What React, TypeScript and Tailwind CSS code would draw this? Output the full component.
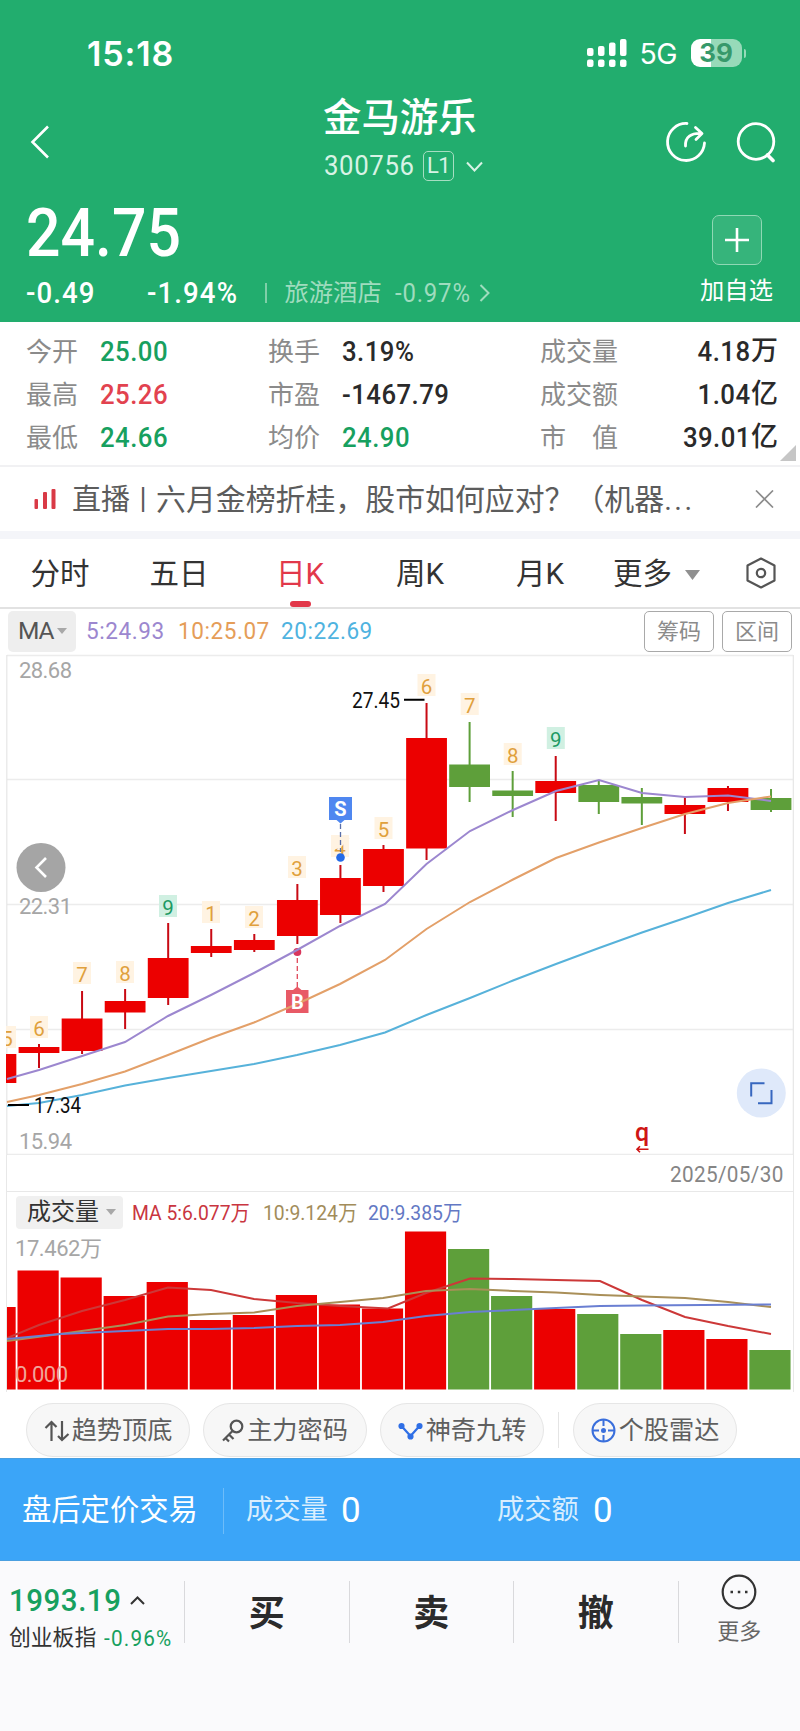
import { useState } from 'react';
import type { ReactNode } from 'react';

interface Candle {
  open: number;
  close: number;
  high: number;
  low: number;
  up: boolean;
  vol: number;
}

interface Count {
  x: number;
  y: number;
  n: string;
  done?: boolean;
}

const RED = '#ec0000';
const GREEN = '#5e9f3a';
const STEP = 43.06;

// values are in chart pixels, top of the page = 0
const candles: Candle[] = [
  { open: 1054, close: 1083, high: 1054, low: 1083, up: true, vol: 1307 },
  { open: 1047, close: 1053, high: 1044, low: 1068, up: true, vol: 1270.5 },
  { open: 1018.5, close: 1051, high: 991, low: 1054, up: true, vol: 1277.5 },
  { open: 1001, close: 1012.5, high: 989, low: 1029, up: true, vol: 1296 },
  { open: 958, close: 998, high: 923, low: 1005, up: true, vol: 1282 },
  { open: 946, close: 953, high: 929, low: 957, up: true, vol: 1320 },
  { open: 940, close: 950, high: 934, low: 952, up: true, vol: 1315 },
  { open: 900, close: 936, high: 884, low: 944, up: true, vol: 1295 },
  { open: 878, close: 915, high: 865, low: 923, up: true, vol: 1304.5 },
  { open: 849, close: 886, high: 845, low: 892, up: true, vol: 1308.5 },
  { open: 738, close: 848.5, high: 703, low: 860, up: true, vol: 1231.5 },
  { open: 764.5, close: 787, high: 722, low: 802, up: false, vol: 1249 },
  { open: 790.5, close: 796, high: 771, low: 817, up: false, vol: 1296 },
  { open: 781, close: 793, high: 756, low: 821, up: true, vol: 1309 },
  { open: 785, close: 802, high: 780, low: 814, up: false, vol: 1314 },
  { open: 797, close: 803.5, high: 788, low: 825, up: false, vol: 1334 },
  { open: 805, close: 814, high: 796, low: 834, up: true, vol: 1330 },
  { open: 788, close: 802, high: 786, low: 811, up: true, vol: 1339 },
  { open: 798, close: 810, high: 789, low: 812, up: false, vol: 1350 },
];

const counts: Count[] = [
  { x: 7, y: 1039, n: '5' },
  { x: 39, y: 1029, n: '6' },
  { x: 82, y: 975, n: '7' },
  { x: 125, y: 974, n: '8' },
  { x: 168, y: 908, n: '9', done: true },
  { x: 211, y: 914, n: '1' },
  { x: 254, y: 919, n: '2' },
  { x: 297, y: 869, n: '3' },
  { x: 340, y: 848, n: '4' },
  { x: 383.5, y: 830, n: '5' },
  { x: 426.5, y: 687, n: '6' },
  { x: 469.7, y: 706, n: '7' },
  { x: 512.7, y: 756, n: '8' },
  { x: 555.8, y: 740, n: '9', done: true },
];

const priceLines = [
  { color: '#9c87cf', points: '7,1079 39,1070 82,1056 125,1042 168,1016 211,995 254,973 297,950 340,926 385,904 426.5,864 470,831 513,810 556,791 599,780 642,793 685,797 728,795.5 771,801' },
  { color: '#e3a069', points: '7,1102 39,1095 82,1084 125,1071.5 168,1055 211,1038 254,1022.5 297,1004 340,984 385,960 426.5,929 470,902 513,879.5 556,858 599,842.5 642,828 685,814 728,803 771,796.5' },
  { color: '#57b2da', points: '7,1106 39,1103 82,1095 125,1085.5 168,1078 211,1071 254,1064 297,1055 340,1045 385,1032.5 426.5,1015 470,998 513,980.5 556,964 599,948 642,932.5 685,918 728,903 771,890' },
];

const volLines = [
  { color: '#cc3838', points: '7,1338 39,1325 82,1311 125,1300 168,1287.5 211,1290 254,1299 297,1303 340,1306 388,1308.5 426,1293 470,1278.5 513,1279 556,1280 600,1281 642,1300 685,1317 728,1326 771,1334' },
  { color: '#a98f58', points: '7,1341 60,1334 125,1325 168,1316.5 211,1314 254,1312.5 297,1306 340,1302 383,1298 426,1291 470,1289 513,1291 556,1292.5 600,1295 642,1296.5 685,1298 728,1302 771,1307' },
  { color: '#6a7fd2', points: '7,1339 60,1334 125,1331 168,1329 211,1329 254,1328 297,1326 340,1325 383,1322 426,1316 470,1312 513,1310 556,1308 600,1306 642,1305.5 771,1304.5' },
];

const quotes = [
  ['今开', '25.00', 'text-[#17a05f]', '换手', '3.19%', 'text-[#2a2a2a]', '成交量', '4.18', '万'],
  ['最高', '25.26', 'text-[#e2424f]', '市盈', '-1467.79', 'text-[#2a2a2a]', '成交额', '1.04', '亿'],
  ['最低', '24.66', 'text-[#17a05f]', '均价', '24.90', 'text-[#17a05f]', '市　值', '39.01', '亿'],
];

const tabs = [
  { name: '分时', width: 'w-[120px]' },
  { name: '五日', width: 'w-[118px]' },
  { name: '日K', width: 'w-[124px]' },
  { name: '周K', width: 'w-[116px]' },
  { name: '月K', width: 'w-[124px]' },
];

// narrow figures
function Num({ className = '', right = false, children }: { className?: string; right?: boolean; children: ReactNode }) {
  return (
    <span className={`inline-block scale-x-92 whitespace-nowrap ${right ? 'origin-right' : 'origin-left'} ${className}`}>{children}</span>
  );
}

function StatusBar() {
  return (
    <div className="flex h-[96px] items-start pl-[87px] pr-[54px] pt-[32px]">
      <span className="font-[Inter] text-[34px] font-semibold leading-[44px] tracking-[0.9px]">15:18</span>
      <div className="ml-auto flex h-[42px] items-center">
        <svg className="h-[28px] w-[40px]" viewBox="0 0 40 28" fill="#fff">
          <rect x="0" y="9" width="6.500" height="8" rx="2" />
          <rect x="11" y="7" width="6.500" height="10" rx="2" />
          <rect x="22" y="3.500" width="6.500" height="13.500" rx="2" />
          <rect x="33" y="0" width="6.500" height="17" rx="2" />
          <rect x="0" y="20.500" width="6.500" height="7.500" rx="2" />
          <rect x="11" y="20.500" width="6.500" height="7.500" rx="2" />
          <rect x="22" y="20.500" width="6.500" height="7.500" rx="2" />
          <rect x="33" y="20.500" width="6.500" height="7.500" rx="2" />
        </svg>
        <span className="ml-[13px] w-[51px] whitespace-nowrap pt-[2px] font-[Inter] text-[28.500px] tracking-[-0.5px]">5G</span>
        <div className="flex h-[28px] w-[51px] items-center justify-center rounded-[9px] bg-linear-to-r from-white from-40% to-[#97dab9] to-40% font-[Inter] text-[26px] font-bold leading-none text-[#37996b]">
          39
        </div>
        <div className="ml-[2px] h-[9px] w-[2.500px] rounded-r bg-[#97dab9]" />
      </div>
    </div>
  );
}

function NavBar() {
  return (
    <div className="flex h-[100px] items-start justify-between pl-[30px] pr-[23px]">
      <svg className="mt-[29px] h-[34px] w-[20px]" viewBox="0 0 20 34" fill="none" stroke="#fff" strokeWidth="2.600">
        <path d="M18 1.500 2.500 17 18 32.500" />
      </svg>
      <div className="ml-[93px] w-[170px]">
        <div className="ml-[4px] whitespace-nowrap text-[38.400px] font-medium leading-[44px]">金马游乐</div>
        <div className="ml-[5px] mt-[8px] flex items-center leading-[36px]">
          <Num className="w-[99px] text-[28px] tracking-[0.7px] text-[#d8f3e5]">300756</Num>
          <span className="flex h-[30px] w-[31px] items-center justify-center rounded-[5px] border-[1.500px] border-[#a6dec2] text-[22px] leading-none tracking-[-0.5px] text-[#d8f3e5]">L1</span>
          <svg className="ml-[12px] h-[11px] w-[17px]" viewBox="0 0 17 11" fill="none" stroke="#d8f3e5" strokeWidth="2">
            <path d="M1 1.500 8.500 9.500 16 1.500" />
          </svg>
        </div>
      </div>
      <div className="mt-[25px] flex gap-[28px]">
        <svg className="h-[42px] w-[42px]" viewBox="0 0 42 42" fill="none" stroke="#fff" strokeWidth="2.800" strokeLinecap="round" strokeLinejoin="round">
          <path d="M22 2.500A18.500 18.500 0 1 0 39.500 22" />
          <path d="M20.500 25C20 16 26 12 36.500 12.500M30.500 6.500 37 12.500 31 18.500" />
        </svg>
        <svg className="h-[42px] w-[42px]" viewBox="0 0 42 42" fill="none" stroke="#fff" strokeWidth="2.800" strokeLinecap="round">
          <circle cx="21" cy="20.500" r="17.800" />
          <path d="M32.500 34 38 39.500" strokeWidth="3.600" />
        </svg>
      </div>
    </div>
  );
}

function Header() {
  return (
    <header className="h-[322px] bg-[#22ad6e] text-white">
      <StatusBar />
      <NavBar />
      <div className="flex justify-between pl-[26px] pr-[27px]">
        <div>
          <Num className="block text-[66px] font-medium leading-[76px]">24.75</Num>
          <div className="mt-[3px] flex h-[36px] items-center text-[30px] tracking-[1.200px]">
            <Num className="w-[121px] font-medium">-0.49</Num>
            <Num className="w-[118px] font-medium">-1.94%</Num>
            <span className="mr-[18px] h-[20px] w-[1.500px] bg-[#7fcfa8]" />
            <span className="w-[110px] text-[24.300px] tracking-normal text-[#9fdcbe]">旅游酒店</span>
            <Num className="w-[84px] text-[26px] tracking-[0.900px] text-[#9fdcbe]">-0.97%</Num>
            <svg className="h-[18px] w-[11px]" viewBox="0 0 11 18" fill="none" stroke="#9fdcbe" strokeWidth="2">
              <path d="M1.500 1 9.500 9 1.500 17" />
            </svg>
          </div>
        </div>
        <div className="flex w-[73px] flex-col items-center">
          <div className="mt-[19px] flex h-[50px] w-[50px] items-center justify-center rounded-[7px] border-[1.500px] border-[#8fd8b4] bg-[#36b47b]">
            <svg className="h-[24px] w-[24px]" viewBox="0 0 24 24" stroke="#fff" strokeWidth="2.600">
              <path d="M12 0V24M0 12H24" />
            </svg>
          </div>
          <span className="mt-[9px] whitespace-nowrap text-[24.300px] leading-[34px]">加自选</span>
        </div>
      </div>
    </header>
  );
}

function Quotes() {
  return (
    <section className="relative h-[145px] border-b-2 border-[#f1f1f3] pl-[26px] pr-[22px] pt-[8px]">
      {quotes.map((q) => (
        <div key={q[0]} className="flex h-[43px] items-center text-[28px] tracking-[0.500px]">
          <span className="w-[74px] text-[26px] tracking-normal text-[#8b8b8b]">{q[0]}</span>
          <Num className={`w-[168px] font-medium ${q[2]}`}>{q[1]}</Num>
          <span className="w-[74px] text-[26px] tracking-normal text-[#8b8b8b]">{q[3]}</span>
          <Num className={`w-[198px] font-medium ${q[5]}`}>{q[4]}</Num>
          <span className="text-[26px] tracking-normal text-[#8b8b8b]">{q[6]}</span>
          <Num right className="ml-auto font-medium text-[#2a2a2a]">{q[7]}</Num>
          <span className="text-[27px] font-medium tracking-normal text-[#2a2a2a]">{q[8]}</span>
        </div>
      ))}
      <svg className="absolute bottom-[4px] right-[4px] h-[16px] w-[16px]" viewBox="0 0 16 16" fill="#c6c6c6">
        <path d="M16 0V16H0Z" />
      </svg>
    </section>
  );
}

function NewsBar() {
  return (
    <section className="flex h-[72px] items-center border-b-8 border-[#f4f5f9] pl-[34px] pr-[26px]">
      <svg className="h-[20px] w-[22px]" viewBox="0 0 22 20" fill="#d93a46">
        <rect x="0.500" y="10" width="3.500" height="10" rx="1" />
        <rect x="9" y="3" width="4" height="17" rx="1" />
        <rect x="17.500" y="0" width="4" height="20" rx="1" />
      </svg>
      <span className="ml-[16px] flex items-center whitespace-nowrap pt-[2px] text-[29px] text-[#5c5c5c]">
        直播
        <span className="w-[26px] pb-[3px] text-center text-[29px]">|</span>
        <span className="text-[29.900px]">六月金榜折桂，股市如何应对？（机器</span>
        <span className="tracking-[2.500px]">...</span>
      </span>
      <svg className="ml-auto h-[18px] w-[19px]" viewBox="0 0 19 18" stroke="#8c8c8c" strokeWidth="1.700">
        <path d="M1 0.500 18 17.500M18 0.500 1 17.500" />
      </svg>
    </section>
  );
}

function Tabs() {
  const [active, setActive] = useState('日K');

  return (
    <nav className="flex h-[70px] items-center border-b-2 border-[#e2e2e2] text-[29.500px] text-[#333]">
      {tabs.map((tab) => (
        <button
          key={tab.name}
          onClick={() => setActive(tab.name)}
          className={`relative flex h-full items-center justify-center pt-[4px] ${tab.width} ${active === tab.name ? 'text-[#e2384a]' : ''}`}
        >
          {tab.name}
          {active === tab.name && <span className="absolute bottom-0 h-[6px] w-[21px] rounded-[3px] bg-[#e2384a]" />}
        </button>
      ))}
      <button className="ml-[11px] flex items-center pt-[4px]">
        更多
        <svg className="ml-[13px] h-[10px] w-[15px]" viewBox="0 0 15 10" fill="#909090">
          <path d="M0 0H15L7.500 10Z" />
        </svg>
      </button>
      <svg className="ml-[46px] h-[32px] w-[30px]" viewBox="0 0 30 32" fill="none" stroke="#555" strokeWidth="2.200" strokeLinejoin="round">
        <path d="M15 1.500 28.500 8.500V23.500L15 30.500 1.500 23.500V8.500Z" />
        <circle cx="15" cy="16" r="4.200" />
      </svg>
    </nav>
  );
}

function MaBar() {
  return (
    <div className="flex h-[44px] items-center pl-[8px] pr-[8px] text-[24.500px] tracking-[0.600px]">
      <div className="flex h-[41px] w-[68px] items-center rounded-[5px] bg-[#eeeeee] pl-[10px] tracking-[-1px] text-[#555]">
        MA
        <svg className="ml-[3px] h-[6px] w-[10px]" viewBox="0 0 10 6" fill="#a8a8a8">
          <path d="M0 0H10L5 6Z" />
        </svg>
      </div>
      <Num className="ml-[10px] w-[92px] text-[#9c87cf]">5:24.93</Num>
      <Num className="w-[103px] text-[#e59d58]">10:25.07</Num>
      <Num className="text-[#4fb3df]">20:22.69</Num>
      <button className="ml-auto h-[41px] w-[70px] rounded-[5px] border-[1.500px] border-[#a9a9a9] pt-[2px] text-[22px] tracking-normal text-[#8b8b8b]">筹码</button>
      <button className="ml-[8px] h-[41px] w-[70px] rounded-[5px] border-[1.500px] border-[#a9a9a9] pt-[2px] text-[22px] tracking-normal text-[#8b8b8b]">区间</button>
    </div>
  );
}

function PriceChart() {
  return (
    <svg className="block h-[502px] w-[800px]" viewBox="0 653 800 502">
      <clipPath id="plot">
        <rect x="6" y="653" width="788" height="502" />
      </clipPath>
      <path d="M7 655.500H793M7 779.500H793M7 904.500H793M7 1029.500H793M7 1154.500H793" stroke="#ececec" strokeWidth="1.300" />
      <path d="M6.800 655V1155M793.300 655V1155" stroke="#e6e6e6" strokeWidth="1.200" />
      <g fill="#a6a6a6" fontSize="22">
        <text x="19" y="678" textLength="53">28.68</text>
        <text x="19" y="914" textLength="53">22.31</text>
        <text x="19" y="1149" textLength="53">15.94</text>
      </g>
      <g clipPath="url(#plot)">
        {counts.map((c) => (
          <g key={c.x}>
            <rect x={c.x - 9} y={c.y - 13} width="18" height="22" fill={c.done ? '#d0f0e2' : '#fff3e2'} />
            <text x={c.x} y={c.y + 7} fontSize="20.500" textAnchor="middle" fill={c.done ? '#1d9a64' : '#e0a03c'}>{c.n}</text>
          </g>
        ))}
        {candles.map((c, i) => {
          const x = 39 + STEP * (i - 1);
          return (
            <g key={i} fill={c.up ? RED : GREEN}>
              <rect x={x - 1} y={c.high} width="2" height={c.low - c.high} fill={c.up ? '#c80a14' : GREEN} />
              <rect x={x - 20.4} y={c.open} width="40.800" height={c.close - c.open} />
            </g>
          );
        })}
      </g>
      <g stroke="#e0485a" fill="#e85a66">
        <path d="M297.300 958V987" strokeWidth="1.300" strokeDasharray="5 3" />
        <path d="M286 990H293L297.300 986.500 301.500 990H308.500V1013H286Z" stroke="none" />
        <circle cx="297.300" cy="952" r="4" fill="#d9365c" stroke="none" />
      </g>
      {priceLines.map((l) => (
        <polyline key={l.color} points={l.points} fill="none" stroke={l.color} strokeWidth="2" />
      ))}
      <text x="297.300" y="1009" fontSize="20" fontWeight="700" fill="#fff" textAnchor="middle">B</text>
      {/* sell marker covers most of the count under it */}
      <path d="M331 838H350L340 848 332 850Z" fill="#fff3e2" />
      <path d="M340.500 824V852" stroke="#5a6fa8" strokeWidth="1.300" strokeDasharray="5 3" />
      <path d="M329 797H352V820H344.500L340.500 823.500 336.500 820H329Z" fill="#4f87f0" />
      <text x="340.500" y="816" fontSize="20" fontWeight="700" fill="#fff" textAnchor="middle">S</text>
      <circle cx="340.500" cy="857.500" r="4.300" fill="#246be8" />
      <g fill="#111" fontSize="21.500">
        <text x="352" y="708" textLength="48" lengthAdjust="spacingAndGlyphs">27.45</text>
        <text x="34" y="1113" textLength="47" lengthAdjust="spacingAndGlyphs">17.34</text>
      </g>
      <path d="M404 699.800H424.500M8 1105H29" stroke="#000" strokeWidth="2" />
      <text x="642" y="1141" fontSize="25" fontWeight="500" fill="#cf1515" textAnchor="middle">q</text>
      <path d="M648.500 1149.300H637M640 1146.300 637 1149.300 640 1152.300" fill="none" stroke="#cf1515" strokeWidth="1.600" />
      <circle cx="41" cy="867.500" r="24.500" fill="#a5a5a5" />
      <path d="M46 858 36.500 867.500 46 877" fill="none" stroke="#fff" strokeWidth="2.600" />
      <circle cx="761.300" cy="1093" r="24.500" fill="#dfe9fa" />
      <path d="M751.200 1096.500V1083.200H764.500M771.500 1090V1103.200H758" fill="none" stroke="#3767bf" strokeWidth="2" />
    </svg>
  );
}

function VolumeChart() {
  return (
    <svg className="block h-[163px] w-[786px]" viewBox="7 1229 786 163">
      <text x="15" y="1256" fontSize="22" fill="#a6a6a6" textLength="87">17.462万</text>
      {candles.map((c, i) => (
        <rect key={i} x={17.5 + (i - 1) * 43.05} y={c.vol} width="41.200" height={1389.5 - c.vol} fill={c.up ? RED : GREEN} />
      ))}
      {volLines.map((l) => (
        <polyline key={l.color} points={l.points} fill="none" stroke={l.color} strokeWidth="2" />
      ))}
      <text x="15" y="1382" fontSize="22" fill="#f0a49a" textLength="53">0.000</text>
    </svg>
  );
}

function VolumePanel() {
  return (
    <section className="ml-[6px] mr-[6px] border-x border-[#e8e8e8]">
      <div className="flex h-[37px] items-center justify-end border-b border-[#e8e8e8] pr-[9px] pt-[2px] text-[22.500px] tracking-[0.400px] text-[#858585]">
        <Num right>2025/05/30</Num>
      </div>
      <div className="flex h-[37px] items-center whitespace-nowrap pl-[9px] pt-[3px] text-[21px]">
        <div className="flex h-[33px] w-[107px] items-center rounded-[4px] bg-[#f0f0f0] pl-[11px] text-[24px] text-[#333]">
          成交量
          <svg className="ml-[7px] h-[6px] w-[10px]" viewBox="0 0 10 6" fill="#a8a8a8">
            <path d="M0 0H10L5 6Z" />
          </svg>
        </div>
        <Num className="ml-[9px] w-[131px] pt-[2px] text-[#c93540]">MA 5:6.077万</Num>
        <Num className="w-[105px] pt-[2px] text-[#a28c5a]">10:9.124万</Num>
        <Num className="pt-[2px] text-[#6378c4]">20:9.385万</Num>
      </div>
      <VolumeChart />
    </section>
  );
}

function Tools() {
  const pill = 'flex h-[54px] w-[164px] shrink-0 items-center justify-center rounded-full border-[1.500px] border-[#e6e6e6] bg-[#f7f7f7] whitespace-nowrap pt-[2px]';

  return (
    <section className="flex h-[66px] items-center pl-[26px] pt-[9px] text-[25.200px] text-[#5f5f5f]">
      <button className={pill}>
        <svg className="mr-[2px] h-[22px] w-[26px]" viewBox="0 0 26 22" fill="none" stroke="#555" strokeWidth="2.200">
          <path d="M7.500 21V2M1.500 8 7.500 2 12.500 7M18 1V20M24.500 14 18 20 14 16" />
        </svg>
        趋势顶底
      </button>
      <button className={`ml-[13px] ${pill}`}>
        <svg className="mr-[3px] h-[24px] w-[22px]" viewBox="0 0 22 24" fill="none" stroke="#555" strokeWidth="2.200">
          <circle cx="14.500" cy="7.500" r="5.800" />
          <path d="M10.500 12 1 21.500M7 15.500 11.500 20M3.500 19 7 22.500" />
        </svg>
        主力密码
      </button>
      <button className={`ml-[13px] ${pill}`}>
        <svg className="mr-[3px] h-[18px] w-[25px]" viewBox="0 0 25 18" fill="#2f6fe6" stroke="#2f6fe6" strokeWidth="2.200">
          <path d="M3.500 4 12.500 14 21.500 4" fill="none" />
          <circle cx="3.500" cy="4" r="2" />
          <circle cx="12.500" cy="14.500" r="2" />
          <circle cx="21.500" cy="4" r="2" />
        </svg>
        神奇九转
      </button>
      <span className="mx-[14px] h-[36px] w-px bg-[#e4e4e4]" />
      <button className={pill}>
        <svg className="mr-[3px] h-[25px] w-[25px]" viewBox="0 0 25 25" fill="none" stroke="#3a6fdc" strokeWidth="2">
          <circle cx="12.500" cy="12.500" r="11" />
          <path d="M12.500 1V8M12.500 17V24M1 12.500H8M17 12.500H24" />
          <circle cx="12.500" cy="12.500" r="1.500" fill="#3a6fdc" />
        </svg>
        个股雷达
      </button>
    </section>
  );
}

function AfterHours() {
  return (
    <section className="flex h-[103px] items-center border-y border-[#4a9fe0] bg-[#3ba5f8] pl-[22px] pt-[2px] text-white">
      <span className="w-[201px] text-[29.300px]">盘后定价交易</span>
      <span className="h-[46px] w-px bg-[#6dbcf9]" />
      <span className="ml-[22px] w-[95px] text-[27.300px] text-[#d9eefe]">成交量</span>
      <span className="w-[156px] text-[35px]">0</span>
      <span className="w-[96px] text-[27.300px] text-[#d9eefe]">成交额</span>
      <span className="text-[35px]">0</span>
    </section>
  );
}

function TradeBar() {
  return (
    <footer className="flex h-[170px] items-start bg-[#fafafc] pt-[20px]">
      <div className="w-[184px] pl-[9px]">
        <div className="flex items-center text-[32px] font-medium leading-[38px] tracking-[0.600px] text-[#17a05f]">
          <Num className="w-[121px]">1993.19</Num>
          <svg className="h-[9px] w-[15px]" viewBox="0 0 15 9" fill="none" stroke="#333" strokeWidth="2">
            <path d="M1 8 7.500 1.500 14 8" />
          </svg>
        </div>
        <div className="mt-[1px] flex whitespace-nowrap leading-[36px]">
          <span className="w-[95px] text-[21.800px] text-[#333]">创业板指</span>
          <Num className="text-[22.500px] tracking-[1.300px] text-[#17a05f]">-0.96%</Num>
        </div>
      </div>
      {['买', '卖', '撤'].map((name) => (
        <button key={name} className="flex h-[62px] w-[164.500px] items-center justify-center border-l border-[#d9d9dc] pt-[3px] text-[36px] font-bold text-[#2b2b2b]">
          {name}
        </button>
      ))}
      <div className="flex h-[62px] flex-1 flex-col items-center border-l border-[#d9d9dc]">
        <svg className="mt-[-7px] h-[36px] w-[36px] shrink-0" viewBox="0 0 36 36" fill="none" stroke="#333" strokeWidth="2.200">
          <circle cx="18" cy="18" r="16.300" />
          <path d="M9.500 18H12M16.800 18H19.300M24 18H26.500" strokeWidth="2.600" />
        </svg>
        <span className="mt-[6px] text-[22px] leading-[32px] text-[#666]">更多</span>
      </div>
    </footer>
  );
}

export default function App() {
  return (
    <div className="h-[1731px] w-[800px] overflow-hidden bg-white font-[Roboto,'Noto_Sans_CJK_SC',sans-serif] leading-none">
      <Header />
      <Quotes />
      <NewsBar />
      <Tabs />
      <MaBar />
      <PriceChart />
      <VolumePanel />
      <Tools />
      <AfterHours />
      <TradeBar />
    </div>
  );
}
